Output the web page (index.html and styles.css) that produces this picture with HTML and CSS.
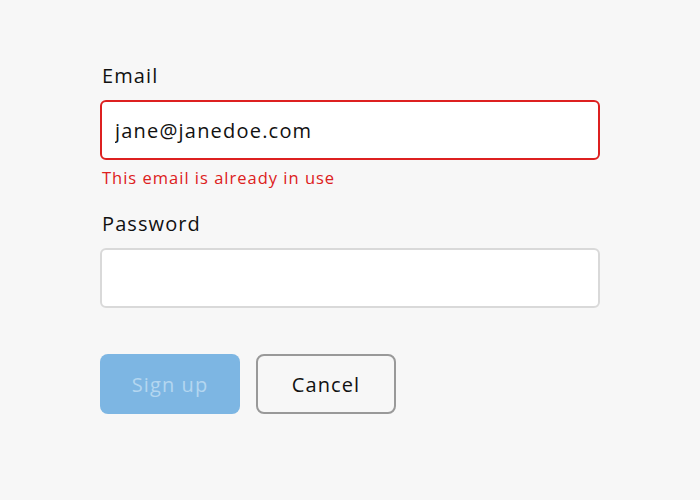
FILE: index.html
```html
<!DOCTYPE html>
<html>
<head>
<meta charset="utf-8">
<link rel="stylesheet" href="styles.css">
</head>
<body>
<form class="form">
  <div class="field">
    <label class="label" for="email">Email</label>
    <input class="input input-error" id="email" type="text" value="jane@janedoe.com">
    <div class="error">This email is already in use</div>
  </div>
  <div class="field">
    <label class="label" for="password">Password</label>
    <input class="input" id="password" type="password">
  </div>
  <div class="actions">
    <button type="button" class="btn btn-primary" disabled>Sign up</button>
    <button type="button" class="btn btn-secondary">Cancel</button>
  </div>
</form>
</body>
</html>
```
FILE: styles.css
```css
html, body {
  margin: 0;
  padding: 0;
  background: #f7f7f7;
  font-family: "Open Sans", "Noto Sans", sans-serif;
  color: #111;
}
.form {
  width: 500px;
  padding: 64px 0 0 100px;
  display: flex;
  flex-direction: column;
}
.field {
  display: flex;
  flex-direction: column;
  margin-bottom: 24px;
}
.label {
  font-size: 20px;
  line-height: 24px;
  letter-spacing: 1.1px;
  margin-bottom: 12px;
  padding-left: 2px;
}
.input {
  box-sizing: border-box;
  width: 500px;
  height: 60px;
  border: 2px solid #d9d9d9;
  border-radius: 6px;
  background: #fff;
  font-family: inherit;
  font-size: 20px;
  letter-spacing: 1.2px;
  color: #111;
  padding: 0 13px;
  outline: none;
}
.input-error {
  border-color: #dd2020;
}
.error {
  color: #dd2020;
  font-size: 16.5px;
  line-height: 20px;
  letter-spacing: 1px;
  margin-top: 8px;
  padding-left: 2px;
}
.actions {
  display: flex;
  gap: 16px;
  margin-top: 22px;
}
.btn {
  width: 140px;
  height: 60px;
  border-radius: 8px;
  font-family: inherit;
  font-size: 20px;
  letter-spacing: 1.1px;
}
.btn-primary {
  background: #7db6e3;
  border: none;
  color: #b4d6f0;
}
.btn-secondary {
  background: #f7f7f7;
  border: 2px solid #999;
  color: #111;
}
```
